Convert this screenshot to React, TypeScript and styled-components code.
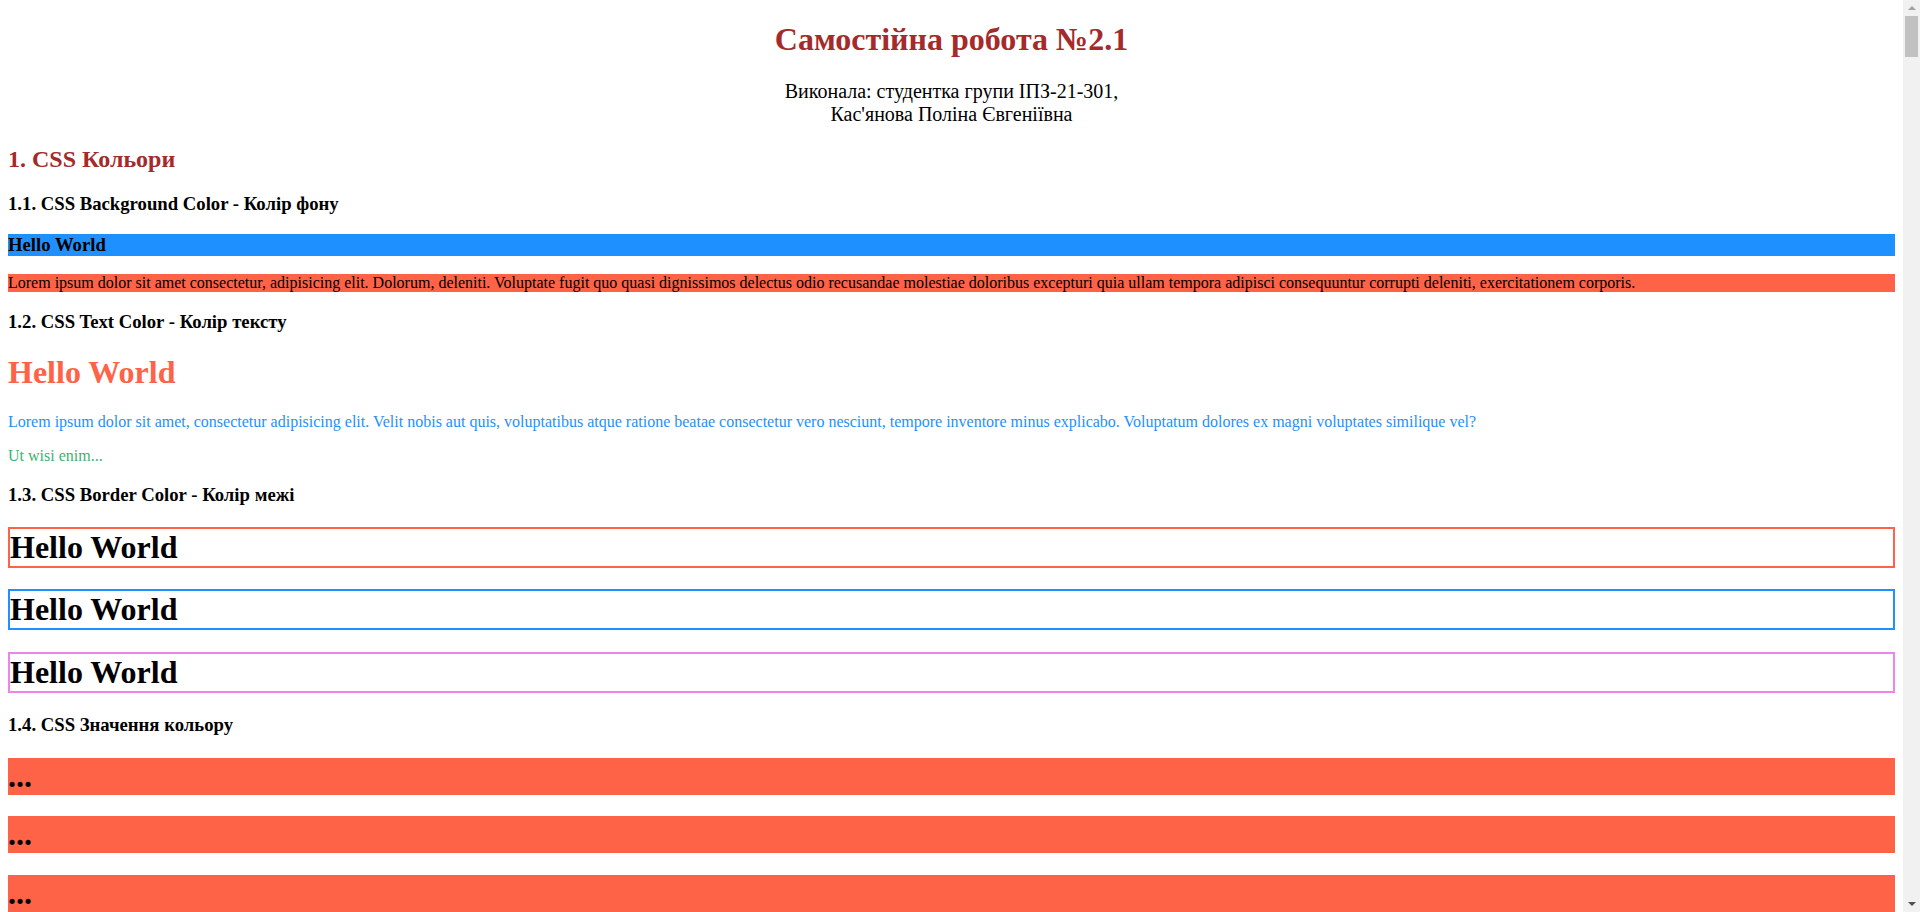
import React from "react";
import styled, { createGlobalStyle } from "styled-components";

const GlobalStyle = createGlobalStyle`
  html {
    background: #ffffff;
  }
  body {
    margin: 0 25px 8px 8px;
    font-family: "Liberation Serif", "Times New Roman", serif;
    font-size: 16px;
    color: #000000;
  }
`;

const Page = styled.main`
  display: block;
`;

const Title = styled.h1`
  margin: 0.67em 0;
  font-size: 32px;
  font-weight: bold;
  text-align: center;
  color: brown;
`;

const Author = styled.p`
  margin: 1em 0;
  font-size: 20px;
  text-align: center;
`;

const SectionTitle = styled.h2`
  margin: 0.83em 0;
  font-size: 24px;
  font-weight: bold;
  color: brown;
`;

const SubTitle = styled.h3`
  margin: 1em 0;
  font-size: 18.72px;
  font-weight: bold;
`;

const BgHeading = styled.h3<{ $bg: string }>`
  margin: 1em 0;
  font-size: 18.72px;
  font-weight: bold;
  background-color: ${(p) => p.$bg};
`;

const BgText = styled.p<{ $bg: string }>`
  margin: 1em 0;
  background-color: ${(p) => p.$bg};
`;

const ColorHeading = styled.h1<{ $color: string }>`
  margin: 0.67em 0;
  font-size: 32px;
  font-weight: bold;
  color: ${(p) => p.$color};
`;

const ColorText = styled.p<{ $color: string }>`
  margin: 1em 0;
  color: ${(p) => p.$color};
`;

const BorderHeading = styled.h1<{ $border: string }>`
  margin: 0.67em 0;
  font-size: 32px;
  font-weight: bold;
  border: 2px solid ${(p) => p.$border};
`;

const ValueHeading = styled.h1<{ $bg: string }>`
  margin: 0.67em 0;
  font-size: 32px;
  font-weight: bold;
  background-color: ${(p) => p.$bg};
`;

/* Replica of the browser's vertical scrollbar seen at the right edge */
const ScrollTrack = styled.aside`
  position: fixed;
  top: 0;
  right: 0;
  bottom: 0;
  width: 17px;
  background: #f1f1f1;
  display: flex;
  flex-direction: column;
  align-items: center;
`;

const ArrowButton = styled.div<{ $down?: boolean }>`
  width: 17px;
  height: 16px;
  flex: none;
  display: flex;
  align-items: center;
  justify-content: center;
  margin-top: ${(p) => (p.$down ? "auto" : "0")};

  &::before {
    content: "";
    width: 0;
    height: 0;
    border-left: 4px solid transparent;
    border-right: 4px solid transparent;
    ${(p) =>
      p.$down
        ? "border-top: 4px solid #505050;"
        : "border-bottom: 4px solid #a3a3a3;"}
  }
`;

const Thumb = styled.div`
  width: 13px;
  height: 41px;
  flex: none;
  background: #c1c1c1;
`;

const borders = ["Tomato", "DodgerBlue", "Violet"];
const values = [
  "rgb(255, 99, 71)",
  "#ff6347",
  "hsl(9, 100%, 64%)",
  "rgba(255, 99, 71, 0.5)",
  "hsla(9, 100%, 64%, 0.5)",
];

export default function App() {
  return (
    <>
      <GlobalStyle />
      <Page>
        <Title>Самостійна робота №2.1</Title>
        <Author>
          Виконала: студентка групи ІПЗ-21-301,
          <br />
          Кас'янова Поліна Євгеніївна
        </Author>

        <SectionTitle>1. CSS Кольори</SectionTitle>

        <SubTitle>1.1. CSS Background Color - Колір фону</SubTitle>
        <BgHeading $bg="DodgerBlue">Hello World</BgHeading>
        <BgText $bg="Tomato">
          Lorem ipsum dolor sit amet consectetur, adipisicing elit. Dolorum, deleniti. Voluptate fugit quo
          quasi dignissimos delectus odio recusandae molestiae doloribus excepturi quia ullam tempora adipisci
          consequuntur corrupti deleniti, exercitationem corporis.
        </BgText>

        <SubTitle>1.2. CSS Text Color - Колір тексту</SubTitle>
        <ColorHeading $color="Tomato">Hello World</ColorHeading>
        <ColorText $color="DodgerBlue">
          Lorem ipsum dolor sit amet, consectetur adipisicing elit. Velit nobis aut quis, voluptatibus atque
          ratione beatae consectetur vero nesciunt, tempore inventore minus explicabo. Voluptatum dolores ex
          magni voluptates similique vel?
        </ColorText>
        <ColorText $color="MediumSeaGreen">Ut wisi enim...</ColorText>

        <SubTitle>1.3. CSS Border Color - Колір межі</SubTitle>
        {borders.map((b) => (
          <BorderHeading key={b} $border={b}>
            Hello World
          </BorderHeading>
        ))}

        <SubTitle>1.4. CSS Значення кольору</SubTitle>
        {values.map((v) => (
          <ValueHeading key={v} $bg={v}>
            ...
          </ValueHeading>
        ))}
      </Page>
      <ScrollTrack aria-hidden="true">
        <ArrowButton />
        <Thumb />
        <ArrowButton $down />
      </ScrollTrack>
    </>
  );
}
